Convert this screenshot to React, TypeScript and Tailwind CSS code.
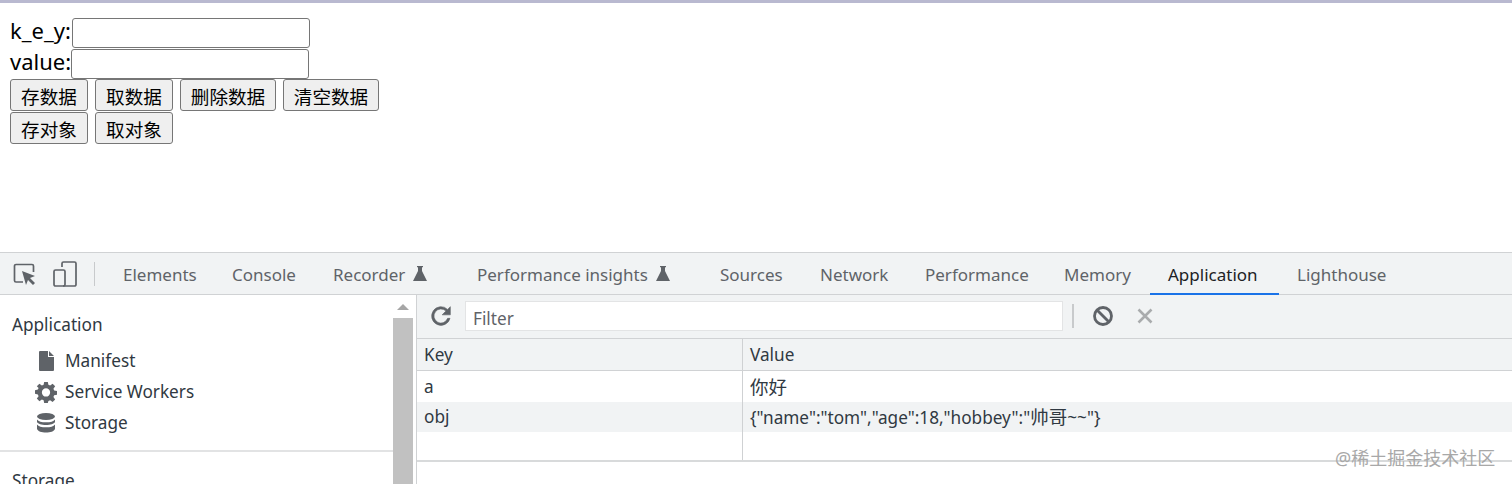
import React from "react";

const F = "font-['Segoe_UI','Noto_Sans','Noto_Sans_CJK_SC',sans-serif]";

function Flask() {
  return (
    <svg width="14" height="15" viewBox="0 0 14 15" className="ml-[8px] mb-[3px] shrink-0">
      <path d="M4 0h6v1.200H9V5l5 10H0L5 5V1.200H4z" fill="#5f6368" />
    </svg>
  );
}

function Tab({ label, w, flask, active }: { label: string; w: number; flask?: boolean; active?: boolean }) {
  return (
    <div
      style={{ width: w }}
      className={`flex items-center self-start pl-[18px] pt-[4px] h-[42px] shrink-0 border-b-2 text-[17px] whitespace-nowrap ${
        active ? "border-[#1a73e8] text-[#202124]" : "border-transparent text-[#5f6368]"
      }`}
    >
      <span>{label}</span>
      {flask && <Flask />}
    </div>
  );
}

function PageBtn({ label, w }: { label: string; w: string }) {
  return (
    <button
      className={`${w} h-[32px] pt-[4px] shrink-0 bg-[#efefef] border border-[#767676] rounded-[3px] text-[18.6px] leading-none text-black`}
    >
      {label}
    </button>
  );
}

function SideItem({ icon, label }: { icon: React.ReactNode; label: string }) {
  return (
    <div className="flex items-center h-[31px] text-[17.2px] text-[#303942]">
      <div className="w-[65px] pl-[35px] shrink-0 flex items-center">{icon}</div>
      <span>{label}</span>
    </div>
  );
}

export default function App() {
  return (
    <div className={`relative w-[1512px] h-[484px] overflow-hidden bg-white flex flex-col ${F}`}>
      <div className="h-[3px] bg-[#b9b9d0] shrink-0" />
      <div className="h-[249px] shrink-0 pl-[10px] pt-[15px] text-[22px] text-black flex flex-col">
        <div className="flex items-center h-[30px] leading-none">
          <span className="w-[62px] pb-[6px] shrink-0">k_e_y:</span>
          <div className="w-[238px] h-[30px] bg-white border border-[#767676] rounded-[3px]" />
        </div>
        <div className="flex items-center h-[30px] mt-[1px] leading-none">
          <span className="w-[61px] pb-[6px] shrink-0">value:</span>
          <div className="w-[238px] h-[30px] bg-white border border-[#767676] rounded-[3px]" />
        </div>
        <div className="flex gap-[7px]">
          <PageBtn label="存数据" w="w-[78px]" />
          <PageBtn label="取数据" w="w-[78px]" />
          <PageBtn label="删除数据" w="w-[96px]" />
          <PageBtn label="清空数据" w="w-[96px]" />
        </div>
        <div className="flex gap-[7px] mt-[1px]">
          <PageBtn label="存对象" w="w-[78px]" />
          <PageBtn label="取对象" w="w-[78px]" />
        </div>
      </div>

      <div className="flex-1 flex flex-col border-t border-[#d0d2d4] min-h-0">
        <div className="h-[42px] shrink-0 bg-[#f1f3f4] border-b border-[#d0d2d4] flex items-center">
          <div className="w-[105px] shrink-0 flex items-center h-full relative">
            <svg width="24" height="24" viewBox="0 0 24 24" className="ml-[13px] shrink-0">
              <path d="M10 20H3a1.500 1.500 0 0 1-1.500-1.500V4A1.500 1.500 0 0 1 3 2.500h16A1.500 1.500 0 0 1 20.500 4v6" fill="none" stroke="#5f6368" strokeWidth="1.700" />
              <path d="M9 9l13 5-5 2 5 5-2 2-5-5-2 5z" fill="#5f6368" />
            </svg>
            <svg width="26" height="26" viewBox="0 0 26 26" className="ml-[15px] shrink-0">
              <path d="M10 6V2.500A1.500 1.500 0 0 1 11.500 1h11A1.500 1.500 0 0 1 24 2.500v21a1.500 1.500 0 0 1-1.500 1.500H11" fill="none" stroke="#5f6368" strokeWidth="1.700" />
              <rect x="2" y="9" width="11" height="16" rx="1.500" fill="none" stroke="#5f6368" strokeWidth="1.700" />
            </svg>
            <div className="absolute left-[94px] top-[9px] w-[1px] h-[24px] bg-[#c8cacc]" />
          </div>
          <Tab label="Elements" w={109} />
          <Tab label="Console" w={101} />
          <Tab label="Recorder" w={144} flask />
          <Tab label="Performance insights" w={243} flask />
          <Tab label="Sources" w={100} />
          <Tab label="Network" w={105} />
          <Tab label="Performance" w={139} />
          <Tab label="Memory" w={104} />
          <Tab label="Application" w={129} active />
          <Tab label="Lighthouse" w={125} />
        </div>

        <div className="flex-1 flex min-h-0">
          <div className="w-[393px] shrink-0 overflow-hidden">
            <div className="h-[157px] border-b-2 border-[#e2e3e4] pt-[14px]">
              <div className="pl-[12px] text-[17.2px] text-[#303942] h-[31px] flex items-center">Application</div>
              <div className="mt-[5px]">
                <SideItem
                  label="Manifest"
                  icon={
                    <svg width="22" height="20" viewBox="0 0 22 20" className="shrink-0">
                      <path d="M4 1a1 1 0 0 1 1-1h8v6h6v13a1 1 0 0 1-1 1H5a1 1 0 0 1-1-1zM14 0l5 5h-5z" fill="#5f6368" />
                    </svg>
                  }
                />
                <SideItem
                  label="Service Workers"
                  icon={
                    <svg width="22" height="22" viewBox="0 0 24 24" className="shrink-0">
                      <path fillRule="evenodd" d="M10 1h4l.6 3.100 1.900.8L19.200 3 22 5.800l-1.900 2.700.8 1.900 3.100.6v4l-3.100.6-.8 1.900 1.900 2.700-2.800 2.800-2.700-1.900-1.900.8L14 24h-4l-.6-3.100-1.900-.8L4.800 22 2 19.200l1.900-2.700-.8-1.900L0 14v-4l3.100-.6.8-1.900L2 5.800 4.800 3l2.700 1.900 1.900-.8zM12 8a4.500 4.500 0 1 0 0 9 4.500 4.500 0 0 0 0-9z" fill="#5f6368" />
                    </svg>
                  }
                />
                <SideItem
                  label="Storage"
                  icon={
                    <svg width="20" height="20" viewBox="0 0 20 20" className="shrink-0 ml-[1px]">
                      <ellipse cx="10" cy="3.500" rx="9" ry="3.500" fill="#5f6368" />
                      <path d="M1 6.500c1.500 2 4.500 2.800 9 2.800s7.500-.8 9-2.800v2.500c-1 2-4.500 3-9 3s-8-1-9-3z" fill="#5f6368" />
                      <path d="M1 11.500c1.500 2 4.500 2.800 9 2.800s7.500-.8 9-2.800v4.500c-1 2.500-4.500 3.500-9 3.500s-8-1-9-3.500z" fill="#5f6368" />
                    </svg>
                  }
                />
              </div>
            </div>
            <div className="pl-[12px] pt-[17px] text-[17.2px] text-[#303942] leading-[24px]">Storage</div>
          </div>

          <div className="w-[20px] shrink-0 flex flex-col items-center">
            <div className="h-[23px] w-full bg-white flex items-center justify-center">
              <svg width="12" height="6" viewBox="0 0 12 6"><path d="M6 0l6 6H0z" fill="#a6a6a6" /></svg>
            </div>
            <div className="flex-1 w-full bg-[#c1c1c1]" />
          </div>
          <div className="w-[3px] shrink-0 bg-white" />

          <div className="flex-1 min-w-0 border-l border-[#d0d2d4] flex flex-col">
            <div className="h-[42px] pb-[1px] box-content shrink-0 bg-[#f1f3f4] border-b-0 flex items-center">
              <svg width="28" height="28" viewBox="0 0 24 24" className="ml-[10px] shrink-0">
                <path d="M17.650 6.350A8 8 0 1 0 19.730 14h-2.080a6 6 0 1 1-1.410-6.240L13 11h7V4z" fill="#5f6368" stroke="#5f6368" strokeWidth="0.500" />
              </svg>
              <div className="ml-[10px] w-[598px] h-[30px] bg-white border border-[#e3e4e5] flex items-center pl-[7px] pt-[5px] text-[17.2px] text-[#5f6368] shrink-0">
                Filter
              </div>
              <div className="ml-[9px] w-[2px] h-[24px] bg-[#c8cacc] shrink-0" />
              <svg width="22" height="22" viewBox="0 0 22 22" className="ml-[18px] shrink-0">
                <circle cx="11" cy="11" r="8.500" fill="none" stroke="#5f6368" strokeWidth="2.800" />
                <path d="M5 5l12 12" stroke="#5f6368" strokeWidth="2.800" />
              </svg>
              <svg width="18" height="18" viewBox="0 0 18 18" className="ml-[22px] shrink-0">
                <path d="M2.500 2.500l13 13M15.500 2.500l-13 13" stroke="#a9abad" strokeWidth="2.600" />
              </svg>
            </div>
            <div className="h-[33px] shrink-0 bg-[#f1f3f4] border-t border-b border-[#d0d2d4] flex items-center text-[17.2px] text-[#303942]">
              <div className="w-[326px] h-full border-r border-[#cfd1d3] pl-[7px] flex items-center shrink-0">Key</div>
              <div className="pl-[7px]">Value</div>
            </div>
            <div className="h-[31px] shrink-0 flex items-center text-[17.2px] text-[#303942]">
              <div className="w-[326px] h-full border-r border-[#cfd1d3] pl-[7px] flex items-center shrink-0">a</div>
              <div className="pl-[7px] text-[18.5px]">你好</div>
            </div>
            <div className="h-[30px] shrink-0 bg-[#f1f3f4] flex items-center text-[17.2px] text-[#303942]">
              <div className="w-[326px] h-full border-r border-[#cfd1d3] pl-[7px] flex items-center shrink-0">obj</div>
              <div className="pl-[7px]">
                {'{"name":"tom","age":18,"hobbey":"'}
                <span className="text-[18.5px]">帅哥</span>
                {'~~"}'}
              </div>
            </div>
            <div className="h-[30px] shrink-0 border-b-2 border-[#d8dadb] flex">
              <div className="w-[326px] h-full border-r border-[#cfd1d3] shrink-0" />
            </div>
          </div>
        </div>
      </div>

      <div className="absolute left-[1335px] top-[446px] text-[18px] leading-[24px] text-[#a8a8a8] whitespace-nowrap">@稀土掘金技术社区</div>
    </div>
  );
}
